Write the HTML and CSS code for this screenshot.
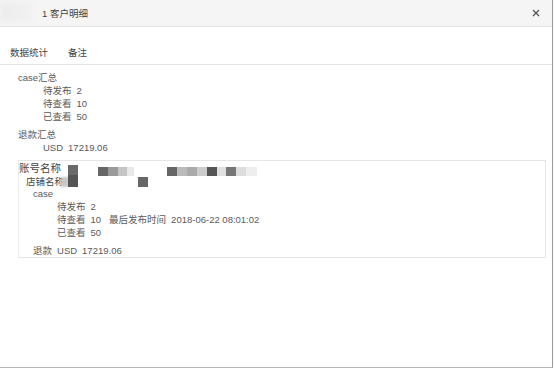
FILE: index.html
```html
<!DOCTYPE html>
<html lang="zh-CN">
<head>
    <meta charset="UTF-8">
    <title>客户明细</title>
    <link rel="stylesheet" href="styles.css">
</head>
<body>
    <div class="dialog">
        <div class="dialog-header">
            <span class="header-blur"></span>
            <span class="title">1 客户明细</span>
            <svg class="close" width="8" height="8" viewBox="0 0 8 8">
                <path d="M1 1 L7 7 M7 1 L1 7" stroke="#555" stroke-width="1.3"/>
            </svg>
        </div>
        <div class="tabs">
            <span class="tab">数据统计</span>
            <span class="tab">备注</span>
        </div>
        <div class="content">
            <div class="group-title">case汇总</div>
            <div class="item"><span class="label">待发布</span>2</div>
            <div class="item"><span class="label">待查看</span>10</div>
            <div class="item"><span class="label">已查看</span>50</div>

            <div class="group-title refund-title">退款汇总</div>
            <div class="item"><span class="label">USD</span>17219.06</div>

            <div class="account-box">
                <div class="account-name">账号名称</div>
                <div class="shop-name">店铺名称</div>
                <div class="case-title">case</div>
                <div class="case-item"><span class="label">待发布</span>2</div>
                <div class="case-item"><span class="label">待查看</span>10<span class="last-time">最后发布时间</span>2018-06-22 08:01:02</div>
                <div class="case-item"><span class="label">已查看</span>50</div>
                <div class="refund"><span class="label">退款</span><span class="label">USD</span>17219.06</div>

                <!-- redacted names -->
                <span class="mosaic m0"></span>
                <span class="mosaic m1"></span>
                <span class="mosaic m2"></span>
                <span class="mosaic m3"></span>
                <span class="mosaic m4"></span>
            </div>
        </div>
    </div>
</body>
</html>
```

FILE: styles.css
```css
body {
    margin: 0;
    background-color: #ffffff;
    font-family: "Liberation Sans", "Noto Sans CJK SC", sans-serif;
    color: #5a5a5a;
    font-size: 9.5px;
}

.dialog {
    width: 552px;
    height: 367px;
    border-right: 1px solid #9a9a9a;
    border-bottom: 1px solid #b5b5b5;
    background-color: #fff;
}

.dialog-header {
    position: relative;
    height: 26px;
    display: flex;
    align-items: center;
    background-color: #f5f5f5;
    border-bottom: 1px solid #e6e6e6;
}

.header-blur {
    position: absolute;
    left: 0;
    top: 2px;
    width: 40px;
    height: 20px;
    background: linear-gradient(90deg, #ececec, #f0f0f0 60%, #f5f5f5);
    filter: blur(2px);
}

.title {
    margin-left: 42px;
    font-size: 9.5px;
    color: #444;
    position: relative;
}

.close {
    margin-left: auto;
    margin-right: 12px;
}

.tabs {
    display: flex;
    align-items: center;
    padding-top: 1px;
    border-bottom: 1px solid #e4e4e4;
    box-sizing: border-box;
    height: 38px;
}

.tab {
    margin-left: 10px;
    font-size: 9.5px;
    color: #444;
    padding-top: 11px;
}

.tab + .tab {
    margin-left: 20px;
}

.content {
    padding: 6px 0 0 18px;
}

.group-title,
.item {
    line-height: 13px;
}

.item {
    padding-left: 25px;
}

.label {
    margin-right: 5px;
}

.refund-title {
    margin-top: 5px;
}

.account-box {
    position: relative;
    margin-top: 6px;
    width: 526px;
    height: 96px;
    border: 1px solid #e6e6e6;
    border-left-color: #ececec;
}

.account-name {
    font-size: 10.5px;
    line-height: 13px;
    margin-top: 1px;
    color: #444;
}

.shop-name {
    padding-left: 7px;
    line-height: 13px;
    color: #444;
}

.case-title {
    padding-left: 14px;
    line-height: 12px;
}

.case-item {
    padding-left: 38px;
    line-height: 13px;
}

.last-time {
    margin-left: 8px;
    margin-right: 5px;
}

.refund {
    padding-left: 14px;
    margin-top: 5px;
    line-height: 13px;
}

.mosaic {
    position: absolute;
    display: block;
}

.m0 {
    left: 42px;
    top: 16px;
    width: 8px;
    height: 10px;
    background-color: #c8c8c8;
    filter: blur(1px);
}

.m1 {
    left: 49px;
    top: 4px;
    width: 10px;
    height: 22px;
    background: linear-gradient(180deg, #6a6a6a 0 45%, #555 45%);
}

.m2 {
    left: 79px;
    top: 6px;
    width: 36px;
    height: 9px;
    background: linear-gradient(90deg, #666 0 28%, #9a9a9a 28% 55%, #c4c4c4 55% 80%, #e8e8e8 80%);
}

.m3 {
    left: 119px;
    top: 16px;
    width: 10px;
    height: 10px;
    background-color: #666;
}

.m4 {
    left: 148px;
    top: 6px;
    width: 90px;
    height: 9px;
    background: linear-gradient(90deg,
        #666 0 11%, #bbb 11% 22%, #aaa 22% 33%, #ccc 33% 44%,
        #555 44% 55%, #e0e0e0 55% 66%, #777 66% 77%, #ddd 77% 88%, #eee 88%);
}
```
